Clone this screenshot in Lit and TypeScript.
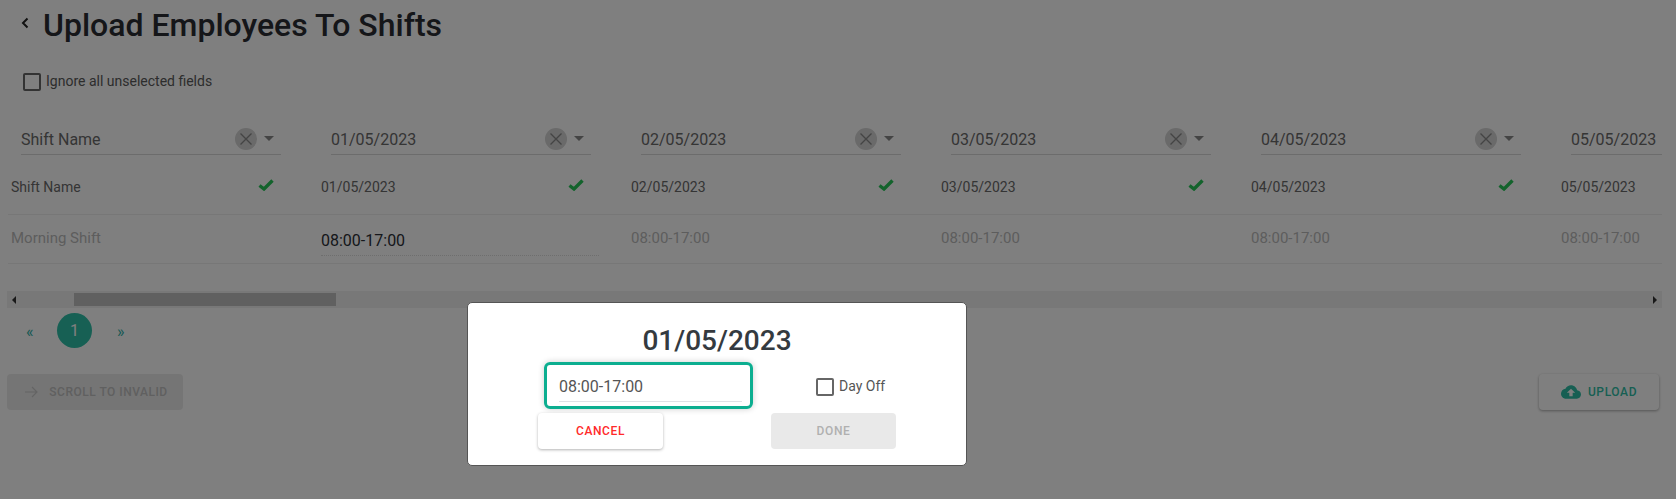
import { LitElement, html, css, svg } from "lit";
import { customElement } from "lit/decorators.js";
import { classMap } from "lit/directives/class-map.js";

const COLUMNS = [
  { head: "Shift Name", sample: "Shift Name", value: "Morning Shift" },
  { head: "01/05/2023", sample: "01/05/2023", value: "08:00-17:00", active: true },
  { head: "02/05/2023", sample: "02/05/2023", value: "08:00-17:00" },
  { head: "03/05/2023", sample: "03/05/2023", value: "08:00-17:00" },
  { head: "04/05/2023", sample: "04/05/2023", value: "08:00-17:00" },
  { head: "05/05/2023", sample: "05/05/2023", value: "08:00-17:00", last: true },
];

const cloud = svg`<path fill-rule="evenodd" d="M19.35 10.04C18.67 6.59 15.64 4 12 4 9.11 4 6.6 5.64 5.35 8.04 2.34 8.36 0 10.91 0 14c0 3.31 2.69 6 6 6h13c2.76 0 5-2.24 5-5 0-2.64-2.05-4.78-4.65-4.96zM14 13v4h-4v-4H7l5-5 5 5h-3z"/>`;

@customElement("app-root")
export class AppRoot extends LitElement {
  static styles = css`
    :host {
      display: block;
      position: relative;
      width: 1676px;
      height: 499px;
      overflow: hidden;
      background: #fff;
      font-family: Roboto, "Liberation Sans", sans-serif;
      color: #2b2f36;
    }
    .top { display: flex; align-items: center; height: 48px; padding-left: 21px; }
    .back { width: 8px; height: 12px; margin-right: 14px; margin-top: -2px; fill: none; stroke: #222; stroke-width: 2; }
    h1 { margin: 2px 0 0; font-size: 32px; line-height: 38px; font-weight: 500; color: #2a2c32; white-space: nowrap; }
    .ignore { display: flex; align-items: center; height: 18px; margin: 25px 0 0 23px; font-size: 14px; color: #5a5a5a; }
    .ignore span { margin-top: -2px; }
    .box { width: 18px; height: 18px; box-sizing: border-box; border: 2px solid #666; border-radius: 2px; margin-right: 5px; flex: none; background: #fff; }
    .table { display: flex; width: 1654px; margin: 33px 0 0 8px; overflow: hidden; }
    .col { flex: 0 0 310px; }
    .head {
      display: flex; align-items: center; box-sizing: border-box; height: 31px; width: 260px;
      margin-left: 13px; padding-bottom: 1px; border-bottom: 1px solid #d8d8d8;
      font-size: 16px; color: #6a6a6a;
    }
    .col.last .head { width: 204px; }
    .head span { flex: 1; margin-top: 2px; }
    .clear { width: 22px; height: 22px; flex: none; }
    .clear circle { fill: #d4d4d4; }
    .clear path { stroke: #888; stroke-width: 1.3; fill: none; }
    .caret { width: 0; height: 0; flex: none; margin: 0 7px; border-left: 5px solid transparent; border-right: 5px solid transparent; border-top: 5px solid #888; }
    .sample {
      display: flex; align-items: center; justify-content: space-between; box-sizing: border-box;
      height: 60px; padding: 4px 44px 0 3px; border-bottom: 1px solid #eee;
      font-size: 14px; color: #6a6a6a;
    }
    .check { width: 16px; height: 12px; margin-top: -4px; fill: none; stroke: #26c659; stroke-width: 3.4; flex: none; }
    .value {
      display: flex; align-items: center; box-sizing: border-box; height: 49px; padding: 0 0 3px 3px;
      border-bottom: 1px solid #eee; font-size: 15px; color: #bbb;
    }
    .value.active { padding-bottom: 1px; }
    .value.active span {
      display: block; width: 278px; padding: 2px 0 1px; margin-top: 4px; line-height: 27px;
      font-size: 16px; color: #2b2f36; border-bottom: 1px dotted #ddd;
    }
    .track { display: flex; align-items: center; width: 1655px; height: 17px; margin: 27px 0 0 7px; background: #f1f1f1; }
    .arrow { width: 0; height: 0; border-top: 4px solid transparent; border-bottom: 4px solid transparent; }
    .arrow.left { border-right: 4px solid #333; margin-left: 5px; }
    .arrow.right { border-left: 4px solid #333; margin-left: auto; margin-right: 5px; }
    .thumb { width: 262px; height: 13px; margin-left: 58px; background: #c1c1c1; }
    .pager { display: flex; align-items: center; height: 35px; margin: 5px 0 0 26px; color: #2bb0a6; font-size: 16px; }
    .pager .num {
      width: 35px; height: 35px; border-radius: 50%; margin: 0 25px 0 23px; background: #2fc0a8; color: #fff;
      display: flex; align-items: center; justify-content: center; font-size: 16px;
    }
    .pager .end { padding-top: 1px; width: 8px; }
    .actions { display: flex; justify-content: space-between; width: 1652px; margin: 26px 0 0 7px; }
    .btn {
      display: flex; align-items: center; justify-content: center; box-sizing: border-box; height: 36px;
      border-radius: 4px; font-size: 12px; font-weight: 500; letter-spacing: 0.6px; white-space: nowrap;
    }
    .scroll { width: 176px; background: #ebebeb; color: #c0c0c0; gap: 11px; letter-spacing: 0.5px; padding-left: 2px; }
    .scroll svg { width: 14px; height: 12px; fill: none; stroke: #c8c8c8; stroke-width: 1.2; }
    .upload { width: 120px; background: #fff; color: #2fbfa6; gap: 7px; box-shadow: 0 1px 3px rgba(0,0,0,.35); }
    .upload svg { width: 20px; height: 20px; fill: #2fbfa6; }

    .overlay { position: absolute; inset: 0; background: rgba(0,0,0,.5); }
    .modal {
      position: absolute; left: 467px; top: 302px; width: 500px; height: 164px; box-sizing: border-box;
      border: 1px solid #555; border-radius: 5px; background: #fff;
      display: flex; flex-direction: column;
    }
    .modal h2 { margin: 21px 0 0; text-align: center; font-size: 28px; line-height: 33px; font-weight: 500; color: #343a40; }
    .form { display: flex; align-items: center; margin: 5px 0 0 76px; }
    .focus {
      box-sizing: border-box; width: 209px; height: 47px; padding: 0 8px 0 12px;
      border: 3px solid #0cae90; border-radius: 6px; box-shadow: 0 0 6px rgba(0,0,0,.2);
    }
    .focus div { font-size: 16px; line-height: 22px; padding-top: 11px; height: 37px; box-sizing: border-box; border-bottom: 1px solid #dfe1e6; color: #555; }
    .dayoff { display: flex; align-items: center; margin: 3px 0 0 63px; font-size: 14px; color: #555; }
    .dayoff span { margin-top: -2px; }
    .modal-actions { display: flex; gap: 108px; margin: 4px 0 0 70px; }
    .modal-actions .btn { width: 125px; }
    .cancel { background: #fff; color: #ff2a2a; box-shadow: 0 1px 3px rgba(0,0,0,.3); }
    .done { background: #e9e9e9; color: #b0b0b0; }
  `;

  render() {
    return html`
      <div class="top">
        <svg class="back" viewBox="0 0 8 12"><path d="M6.5 1.5 L2 6 L6.5 10.5" /></svg>
        <h1>Upload Employees To Shifts</h1>
      </div>
      <div class="ignore"><div class="box"></div><span>Ignore all unselected fields</span></div>
      <div class="table">
        ${COLUMNS.map(
          (c) => html`
            <div class=${classMap({ col: true, last: !!c.last })}>
              <div class="head">
                <span>${c.head}</span>
                ${c.last
                  ? ""
                  : html`<svg class="clear" viewBox="0 0 22 22"><circle cx="11" cy="11" r="11" /><path d="M5.5 5.5 L16.5 16.5 M16.5 5.5 L5.5 16.5" /></svg><i class="caret"></i>`}
              </div>
              <div class="sample">
                <span>${c.sample}</span>
                ${c.last ? "" : html`<svg class="check" viewBox="0 0 16 12"><path d="M1.5 6.5 L6 10 L14.5 1.5" /></svg>`}
              </div>
              <div class=${classMap({ value: true, active: !!c.active })}><span>${c.value}</span></div>
            </div>
          `
        )}
      </div>
      <div class="track"><i class="arrow left"></i><div class="thumb"></div><i class="arrow right"></i></div>
      <div class="pager"><span class="end">«</span><div class="num">1</div><span class="end">»</span></div>
      <div class="actions">
        <div class="btn scroll">
          <svg viewBox="0 0 14 12"><path d="M1 6 H13 M8 1 L13 6 L8 11" /></svg>
          SCROLL TO INVALID
        </div>
        <div class="btn upload"><svg viewBox="0 0 24 24">${cloud}</svg>UPLOAD</div>
      </div>
      <div class="overlay"></div>
      <div class="modal">
        <h2>01/05/2023</h2>
        <div class="form">
          <div class="focus"><div>08:00-17:00</div></div>
          <div class="dayoff"><div class="box"></div><span>Day Off</span></div>
        </div>
        <div class="modal-actions">
          <div class="btn cancel">CANCEL</div>
          <div class="btn done">DONE</div>
        </div>
      </div>
    `;
  }
}
